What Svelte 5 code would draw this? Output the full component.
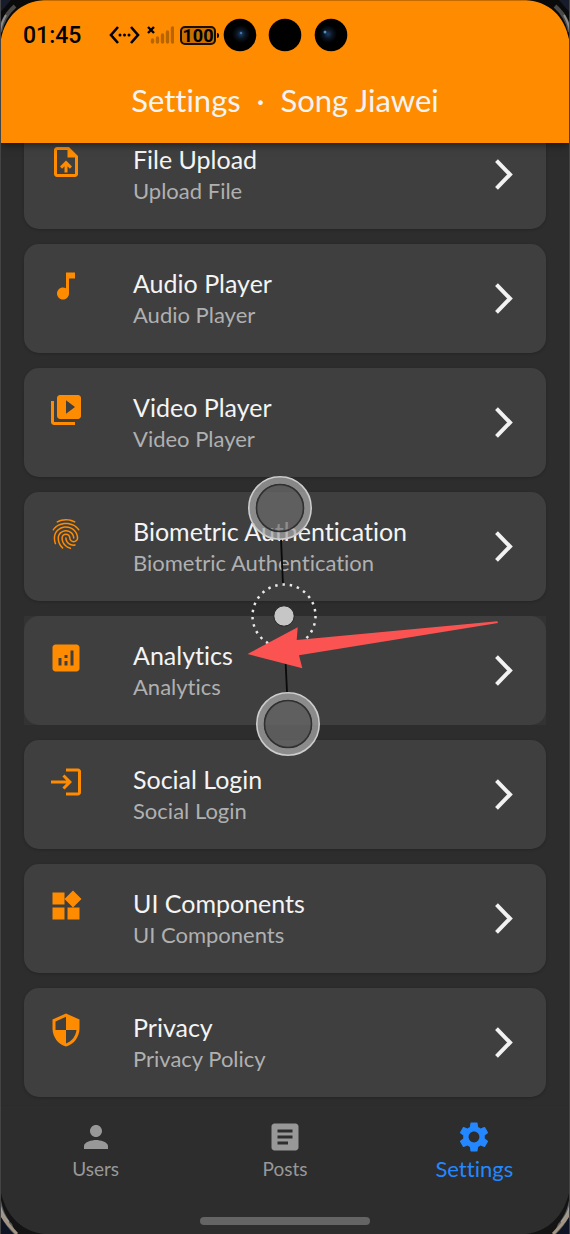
<script>
  const items = [
    {
      title: 'File Upload',
      subtitle: 'Upload File',
      icon: 'M14 2H6c-1.1 0-1.99.9-1.99 2L4 20c0 1.1.89 2 1.99 2H18c1.1 0 2-.9 2-2V8l-6-6zm4 18H6V4h7v5h5v11zM8 15.01l1.41 1.41L11 14.84V19h2v-4.16l1.59 1.59L16 15.01 12.01 11 8 15.01z'
    },
    {
      title: 'Audio Player',
      subtitle: 'Audio Player',
      icon: 'M12 3v10.55c-.59-.34-1.27-.55-2-.55-2.21 0-4 1.79-4 4s1.79 4 4 4 4-1.79 4-4V7h4V3h-6z'
    },
    {
      title: 'Video Player',
      subtitle: 'Video Player',
      icon: 'M4 6H2v14c0 1.1.9 2 2 2h14v-2H4V6zm16-4H8c-1.1 0-2 .9-2 2v12c0 1.1.9 2 2 2h12c1.1 0 2-.9 2-2V4c0-1.1-.9-2-2-2zm-8 12.5v-9l6 4.5-6 4.5z'
    },
    {
      title: 'Biometric Authentication',
      subtitle: 'Biometric Authentication',
      icon: 'M17.81 4.47c-.08 0-.16-.02-.23-.06C15.66 3.42 14 3 12.01 3c-1.98 0-3.86.47-5.57 1.41-.24.13-.54.04-.68-.2-.13-.24-.04-.55.2-.68C7.82 2.52 9.86 2 12.01 2c2.13 0 3.99.47 6.03 1.52.25.13.34.43.21.67-.09.18-.26.28-.44.28zM3.5 9.72c-.1 0-.2-.03-.29-.09-.23-.16-.28-.47-.12-.7.99-1.4 2.25-2.5 3.75-3.27C9.98 4.04 14 4.03 17.15 5.65c1.5.77 2.76 1.86 3.75 3.25.16.22.11.54-.12.7-.23.16-.54.11-.7-.12-.9-1.26-2.04-2.25-3.39-2.94-2.87-1.47-6.54-1.47-9.4.01-1.36.7-2.5 1.7-3.4 2.96-.08.14-.23.21-.39.21zm6.25 12.07c-.13 0-.26-.05-.35-.15-.87-.87-1.34-1.43-2.01-2.64-.69-1.23-1.05-2.73-1.05-4.34 0-2.97 2.54-5.39 5.66-5.39s5.66 2.42 5.66 5.39c0 .28-.22.5-.5.5s-.5-.22-.5-.5c0-2.42-2.09-4.39-4.66-4.39-2.57 0-4.66 1.97-4.66 4.39 0 1.44.32 2.77.93 3.85.64 1.15 1.08 1.64 1.85 2.42.19.2.19.51 0 .71-.11.1-.24.15-.37.15zm7.17-1.85c-1.19 0-2.24-.3-3.1-.89-1.49-1.01-2.38-2.65-2.38-4.39 0-.28.22-.5.5-.5s.5.22.5.5c0 1.41.72 2.74 1.94 3.56.71.48 1.54.71 2.54.71.24 0 .64-.03 1.04-.1.27-.05.53.13.58.41.05.27-.13.53-.41.58-.57.11-1.07.12-1.21.12zM14.91 22c-.04 0-.09-.01-.13-.02-1.59-.44-2.63-1.03-3.72-2.1-1.4-1.39-2.17-3.24-2.17-5.22 0-1.62 1.38-2.94 3.08-2.94 1.7 0 3.08 1.32 3.08 2.94 0 1.07.93 1.94 2.08 1.94s2.08-.87 2.08-1.94c0-3.77-3.25-6.83-7.25-6.83-2.84 0-5.44 1.58-6.61 4.03-.39.81-.59 1.76-.59 2.8 0 .78.07 2.01.67 3.61.1.26-.03.55-.29.64-.26.1-.55-.04-.64-.29-.49-1.31-.73-2.61-.73-3.96 0-1.2.23-2.29.68-3.24 1.33-2.79 4.28-4.6 7.51-4.6 4.55 0 8.25 3.51 8.25 7.83 0 1.62-1.38 2.94-3.08 2.94s-3.08-1.32-3.08-2.94c0-1.07-.93-1.94-2.08-1.94s-2.08.87-2.08 1.94c0 1.71.66 3.31 1.87 4.51.95.94 1.86 1.46 3.27 1.85.27.07.42.35.35.61-.05.23-.26.38-.47.38z'
    },
    {
      title: 'Analytics',
      subtitle: 'Analytics',
      pressed: true,
      icon: 'M19 3H5c-1.1 0-2 .9-2 2v14c0 1.1.9 2 2 2h14c1.1 0 2-.9 2-2V5c0-1.1-.9-2-2-2zM9 17H7v-5h2v5zm4 0h-2v-3h2v3zm0-5h-2v-2h2v2zm4 5h-2V7h2v10z'
    },
    {
      title: 'Social Login',
      subtitle: 'Social Login',
      icon: 'M11 7L9.6 8.4l2.6 2.6H2v2h10.2l-2.6 2.6L11 17l5-5-5-5zm9 12h-8v2h8c1.1 0 2-.9 2-2V5c0-1.1-.9-2-2-2h-8v2h8v14z'
    },
    {
      title: 'UI Components',
      subtitle: 'UI Components',
      icon: 'M13 13v8h8v-8h-8zM3 21h8v-8H3v8zM3 3v8h8V3H3zm13.66-1.31L11 7.34 16.66 13l5.66-5.66-5.66-5.65z'
    },
    {
      title: 'Privacy',
      subtitle: 'Privacy Policy',
      icon: 'M12 1L3 5v6c0 5.55 3.84 10.74 9 12 5.16-1.26 9-6.45 9-12V5l-9-4zm0 10.99h7c-.53 4.12-3.28 7.79-7 8.94V12H5V6.3l7-3.11v8.8z'
    }
  ];

  const tabs = [
    {
      label: 'Users',
      icon: 'M12 12c2.21 0 4-1.79 4-4s-1.79-4-4-4-4 1.79-4 4 1.79 4 4 4zm0 2c-2.67 0-8 1.34-8 4v2h16v-2c0-2.66-5.33-4-8-4z'
    },
    {
      label: 'Posts',
      icon: 'M19 3H5c-1.1 0-2 .9-2 2v14c0 1.1.9 2 2 2h14c1.1 0 2-.9 2-2V5c0-1.1-.9-2-2-2zm-5 14H7v-2h7v2zm3-4H7v-2h10v2zm0-4H7V7h10v2z'
    },
    {
      label: 'Settings',
      icon: 'M19.14 12.94c.04-.3.06-.61.06-.94 0-.32-.02-.64-.07-.94l2.03-1.58c.18-.14.23-.41.12-.61l-1.92-3.32c-.12-.22-.37-.29-.59-.22l-2.39.96c-.5-.38-1.03-.7-1.62-.94l-.36-2.54c-.04-.24-.24-.41-.48-.41h-3.84c-.24 0-.43.17-.47.41l-.36 2.54c-.59.24-1.13.57-1.62.94l-2.39-.96c-.22-.08-.47 0-.59.22L2.74 8.87c-.12.21-.08.47.12.61l2.03 1.58c-.05.3-.09.63-.09.94s.02.64.07.94l-2.03 1.58c-.18.14-.23.41-.12.61l1.92 3.32c.12.22.37.29.59.22l2.39-.96c.5.38 1.03.7 1.62.94l.36 2.54c.05.24.24.41.48.41h3.84c.24 0 .44-.17.47-.41l.36-2.54c.59-.24 1.13-.56 1.62-.94l2.39.96c.22.08.47 0 .59-.22l1.92-3.32c.12-.22.07-.47-.12-.61l-2.01-1.58zM12 15.6c-1.98 0-3.6-1.62-3.6-3.6s1.62-3.6 3.6-3.6 3.6 1.62 3.6 3.6-1.62 3.6-3.6 3.6z'
    }
  ];

  let current = $state('Settings');
</script>

<div class="phone">
  <header class="app-bar">
    <div class="status">
      <time>01:45</time>
      <svg class="link" width="31" height="20" viewBox="0 0 31 20" aria-hidden="true">
        <path d="M9 2 2 10l7 8M22 2l7 8-7 8" fill="none" stroke="#000" stroke-width="2.6" />
        <circle cx="11" cy="10" r="1.5" />
        <circle cx="15.5" cy="10" r="1.5" />
        <circle cx="20" cy="10" r="1.5" />
      </svg>
      <svg class="signal" width="27" height="20" viewBox="0 0 27 20" aria-hidden="true">
        <path d="M1 2l6 6M7 2 1 8" stroke="#000" stroke-width="2.4" />
        <path
          d="M5.500 17v-2M10.500 17v-4M15.500 17v-7M20.500 17v-10M25.500 17v-14"
          stroke="#b86500"
          stroke-width="3.4"
          stroke-linecap="round"
        />
      </svg>
      <span class="battery">100</span>
    </div>
    <h1>Settings&nbsp; ·&nbsp; Song Jiawei</h1>
  </header>

  <main>
    <ul>
      {#each items as item}
        <li class:pressed={item.pressed}>
          <button class="card">
            <svg class="icon" viewBox="0 0 24 24" aria-hidden="true"><path d={item.icon} /></svg>
            <span class="text">
              <span class="title">{item.title}</span>
              <span class="subtitle">{item.subtitle}</span>
            </span>
            <svg class="chevron" width="18" height="32" viewBox="0 0 18 32" aria-hidden="true">
              <path d="M1.500 1.700 15 15.500 1.500 29.300" />
            </svg>
          </button>
        </li>
      {/each}
    </ul>
  </main>

  <nav>
    <div class="tabs">
      {#each tabs as tab}
        <button class="tab" class:active={tab.label === current} onclick={() => (current = tab.label)}>
          <svg class="icon" viewBox="0 0 24 24" aria-hidden="true"><path d={tab.icon} /></svg>
          <span>{tab.label}</span>
        </button>
      {/each}
    </div>
    <div class="home-bar"></div>
  </nav>

  <!-- Front cameras -->
  <svg class="cameras" width="126" height="34" viewBox="0 0 126 34" aria-hidden="true">
    <defs>
      <radialGradient id="lens">
        <stop offset="0" stop-color="#1d3d63" />
        <stop offset="0.5" stop-color="#0b1522" />
        <stop offset="1" stop-color="#000" />
      </radialGradient>
    </defs>
    <circle cx="18" cy="17" r="16.300" />
    <circle cx="63" cy="17" r="16.300" />
    <circle cx="109" cy="17" r="16.300" />
    <circle cx="19" cy="16" r="9" fill="url(#lens)" />
    <circle cx="106" cy="16" r="9" fill="url(#lens)" />
    <circle cx="19" cy="15" r="1.300" fill="#3f74a8" />
    <circle cx="103" cy="14" r="1.500" fill="#4f8fc0" />
  </svg>

  <!-- Two finger gesture and pointer arrow -->
  <svg class="gesture" width="252" height="280" viewBox="247 476 252 280" aria-hidden="true">
    <path d="M281 539 283 585M285.500 660 287 692" stroke="#0a0a0a" stroke-width="1.800" />
    {#each [[280, 508], [288, 724]] as [x, y]}
      <circle cx={x} cy={y} r="27.500" class="band" />
      <circle cx={x} cy={y} r="31.200" class="rim" />
      <circle cx={x} cy={y} r="23.500" class="pad" />
    {/each}
    <circle cx="284" cy="616" r="31.500" class="dots" />
    <circle cx="284" cy="616" r="10.200" fill="#c6c6c6" stroke="#262626" />
    <path
      d="M247.500 654 297.700 627.300 296.700 640 497.300 621.300 498 623 299 655.300 302.300 668.300Z"
      fill="#fb5352"
    />
  </svg>

  <!-- Bezel corners -->
  {#each ['left', 'right'] as side}
    <svg class="corner top {side}" width="50" height="50" viewBox="0 0 50 50" aria-hidden="true">
      <path d="M0 0H44C19 2 3 18 0 46Z" fill="#0a0a0a" />
      <path d="M0 32C2 22 7 13 15 6" fill="none" stroke="#4a4a4a" stroke-width="4" />
      <path d="M0 32C1 25 3 20 6 15" fill="none" stroke="#8c8c8c" stroke-width="2" />
      <path d="M0 0H11L0 13Z" fill="#171c2b" />
    </svg>
    <svg class="corner bottom {side}" width="50" height="50" viewBox="0 0 50 50" aria-hidden="true">
      <path d="M0 4C3 22 14 46 44 50H0Z" fill="#141414" />
      <path d="M0 8C1 22 5 32 12 40L16 50H0Z" fill="#5c5c5c" />
      <path d="M0 16C1 25 4 31 9 37L8 42 0 32Z" fill="#a0a0a0" />
      <path d="M0 28C4 36 10 43 17 50" fill="none" stroke="#a29480" stroke-width="3" />
      <path d="M0 31C4 39 9 45 14 50H0Z" fill="#0e1424" />
    </svg>
  {/each}
</div>

<style>
  :global(body) {
    background: #2d2d2d;
  }

  .phone {
    position: relative;
    display: flex;
    flex-direction: column;
    height: 100vh;
    box-sizing: border-box;
    overflow: hidden;
    border: solid #444;
    border-width: 0 1px;
    background: #2d2d2d;
    color: #f4f4f4;
    font-family: Lato, sans-serif;
    font-variant-ligatures: none;
  }

  .app-bar {
    position: relative;
    z-index: 1;
    flex: none;
    background: #ff8c00;
    border-top: 1px solid #c56c00;
    box-shadow: 0 2px 8px rgba(0, 0, 0, 0.5);
    padding: 16px 0 14px;
  }

  .status {
    display: flex;
    align-items: center;
    height: 36px;
    padding-left: 22px;
    color: #000;
  }

  time {
    width: 86px;
    font-size: 23px;
    font-weight: 500;
    font-family: Roboto, sans-serif;
  }

  .link {
    margin-right: 7px;
  }

  .signal {
    margin-right: 6px;
  }

  .battery {
    position: relative;
    box-sizing: border-box;
    width: 36px;
    height: 19px;
    border: 2px solid #1a0e00;
    border-radius: 5px;
    background: #c97000;
    font: 700 18px/15px Roboto, sans-serif;
    text-align: center;
  }

  .battery::after {
    content: '';
    position: absolute;
    top: 5px;
    right: -5px;
    width: 2px;
    height: 5px;
    border-radius: 0 2px 2px 0;
    background: #000;
  }

  h1 {
    margin: 18px 0 0;
    text-align: center;
    font-size: 31px;
    line-height: 58px;
    font-weight: 400;
  }

  /* Opens scrolled to the end of the list */
  main {
    flex: 1;
    min-height: 0;
    display: flex;
    flex-direction: column-reverse;
    overflow-y: auto;
    scrollbar-width: none;
  }

  ul {
    display: flex;
    flex-direction: column;
    gap: 15px;
    margin: 0;
    padding: 16px 23px 8px;
    list-style: none;
  }

  .pressed {
    background: #333;
  }

  button {
    border: 0;
    background: none;
    color: inherit;
    font: inherit;
    font-variant-ligatures: inherit;
    cursor: pointer;
  }

  .card {
    display: flex;
    width: 100%;
    padding: 24px 33px 23px 24px;
    border-radius: 15px;
    background: #3f3f3f;
    box-shadow: 0 1px 3px rgba(0, 0, 0, 0.2);
    text-align: left;
  }

  .pressed .card {
    box-shadow: none;
  }

  .icon {
    flex: none;
    width: 36px;
    height: 36px;
    fill: currentColor;
  }

  .card .icon {
    color: #ff8c00;
  }

  .text {
    flex: 1;
    display: flex;
    flex-direction: column;
    margin-left: 49px;
  }

  .title,
  .subtitle {
    font-size: 25px;
    line-height: 31px;
  }

  .subtitle {
    font-size: 22px;
    color: #b0b0b0;
  }

  .chevron {
    align-self: center;
    fill: none;
    stroke: #f2f2f2;
    stroke-width: 4;
  }

  nav {
    flex: none;
    border-top: 1px solid #2b2b2b;
    padding: 13px 0 9px;
  }

  .tabs {
    display: grid;
    grid-template-columns: repeat(3, 1fr);
  }

  .tab {
    display: flex;
    flex-direction: column;
    align-items: center;
    padding: 0;
    color: #989898;
    font-size: 19px;
    line-height: 28px;
  }

  .active {
    color: #2388ff;
    font-size: 22px;
  }

  .home-bar {
    width: 170px;
    height: 8px;
    margin: 34px auto 0;
    border-radius: 4px;
    background: #646464;
  }

  .cameras {
    position: absolute;
    z-index: 2;
    top: 18px;
    left: calc(50% - 63px);
  }

  .gesture {
    position: absolute;
    z-index: 2;
    top: 476px;
    left: 246px;
    pointer-events: none;
  }

  .band {
    fill: none;
    stroke: #a5a5a5;
    stroke-width: 7;
    opacity: 0.75;
  }

  .rim {
    fill: none;
    stroke: #cdcdcd;
    stroke-width: 1.6;
  }

  .pad {
    fill: rgba(107, 107, 107, 0.75);
    stroke: #303030;
    stroke-width: 1.6;
  }

  .dots {
    fill: none;
    stroke: #e8e8e8;
    stroke-width: 2.5;
    stroke-dasharray: 2.5 4.83;
  }

  .corner {
    position: absolute;
    z-index: 3;
    pointer-events: none;
  }

  .top {
    top: 0;
  }

  .bottom {
    bottom: 0;
  }

  .left {
    left: -1px;
  }

  .right {
    right: -1px;
    transform: scaleX(-1);
  }
</style>
